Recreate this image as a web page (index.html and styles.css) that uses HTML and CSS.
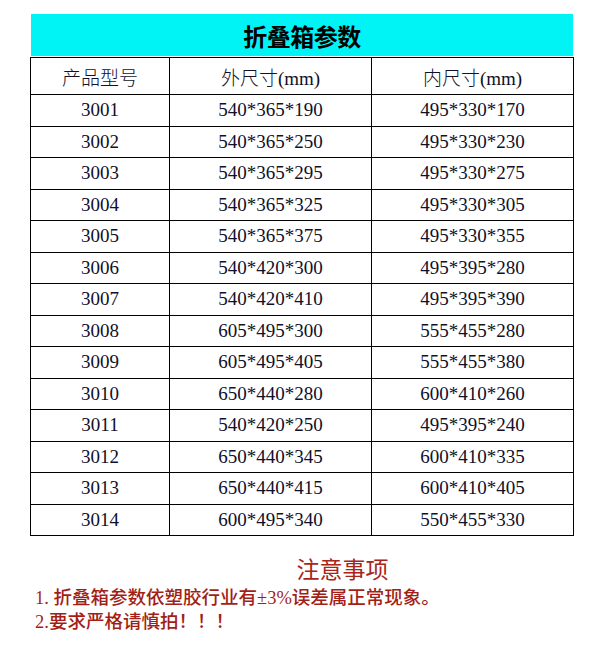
FILE: index.html
```html
<!DOCTYPE html>
<html lang="zh-CN">
<head>
<meta charset="utf-8">
<title>折叠箱参数</title>
<link rel="stylesheet" href="styles.css">
</head>
<body>
<div class="page">
  <div class="title">折叠箱参数</div>
  <table class="spec">
    <colgroup>
      <col class="c1"><col class="c2"><col class="c3">
    </colgroup>
    <thead>
      <tr><th>产品型号</th><th>外尺寸(mm)</th><th>内尺寸(mm)</th></tr>
    </thead>
    <tbody>
      <tr><td>3001</td><td>540*365*190</td><td>495*330*170</td></tr>
      <tr><td>3002</td><td>540*365*250</td><td>495*330*230</td></tr>
      <tr><td>3003</td><td>540*365*295</td><td>495*330*275</td></tr>
      <tr><td>3004</td><td>540*365*325</td><td>495*330*305</td></tr>
      <tr><td>3005</td><td>540*365*375</td><td>495*330*355</td></tr>
      <tr><td>3006</td><td>540*420*300</td><td>495*395*280</td></tr>
      <tr><td>3007</td><td>540*420*410</td><td>495*395*390</td></tr>
      <tr><td>3008</td><td>605*495*300</td><td>555*455*280</td></tr>
      <tr><td>3009</td><td>605*495*405</td><td>555*455*380</td></tr>
      <tr><td>3010</td><td>650*440*280</td><td>600*410*260</td></tr>
      <tr><td>3011</td><td>540*420*250</td><td>495*395*240</td></tr>
      <tr><td>3012</td><td>650*440*345</td><td>600*410*335</td></tr>
      <tr><td>3013</td><td>650*440*415</td><td>600*410*405</td></tr>
      <tr><td>3014</td><td>600*495*340</td><td>550*455*330</td></tr>
    </tbody>
  </table>
  <div class="notes">
    <div class="notes-title">注意事项</div>
    <div class="note">1. 折叠箱参数依塑胶行业有±3%误差属正常现象。</div>
    <div class="note">2.要求严格请慎拍！！！</div>
  </div>
</div>
</body>
</html>
```
FILE: styles.css
```css
html, body {
  margin: 0;
  padding: 0;
  background: #ffffff;
}

body {
  font-family: "Liberation Serif", "Noto Sans CJK SC", serif;
  color: #111111;
}

.page {
  display: flex;
  flex-direction: column;
  padding: 14px 0 0 30px;
  width: 544px;
}

.title {
  margin-left: 1px;
  width: 542px;
  height: 42px;
  background: #00f4f6;
  display: flex;
  align-items: center;
  justify-content: center;
  font-size: 24px;
  font-weight: 700;
  color: #000000;
  letter-spacing: -0.5px;
  padding-top: 1px;
  box-sizing: border-box;
}

.spec {
  margin-top: 1px;
  border-collapse: collapse;
  width: 543px;
  table-layout: fixed;
}

.spec .c1 { width: 139px; }
.spec .c2 { width: 202px; }
.spec .c3 { width: 202px; }

.spec th,
.spec td {
  border: 1px solid #000000;
  text-align: center;
  padding: 0;
  font-size: 19px;
  font-weight: 400;
  color: #10102a;
}

.spec thead tr { height: 37px; }
.spec th { font-weight: 300; }

.spec tbody tr { height: 31.5px; }

.notes {
  display: flex;
  flex-direction: column;
  padding-left: 5px;
  color: #a21f18;
}

.notes-title {
  align-self: center;
  margin: 22px 0 2px 76px;
  font-size: 23px;
  line-height: 26px;
  color: #a82519;
}

.note {
  font-size: 18.5px;
  line-height: 24px;
  font-weight: 500;
}
```
